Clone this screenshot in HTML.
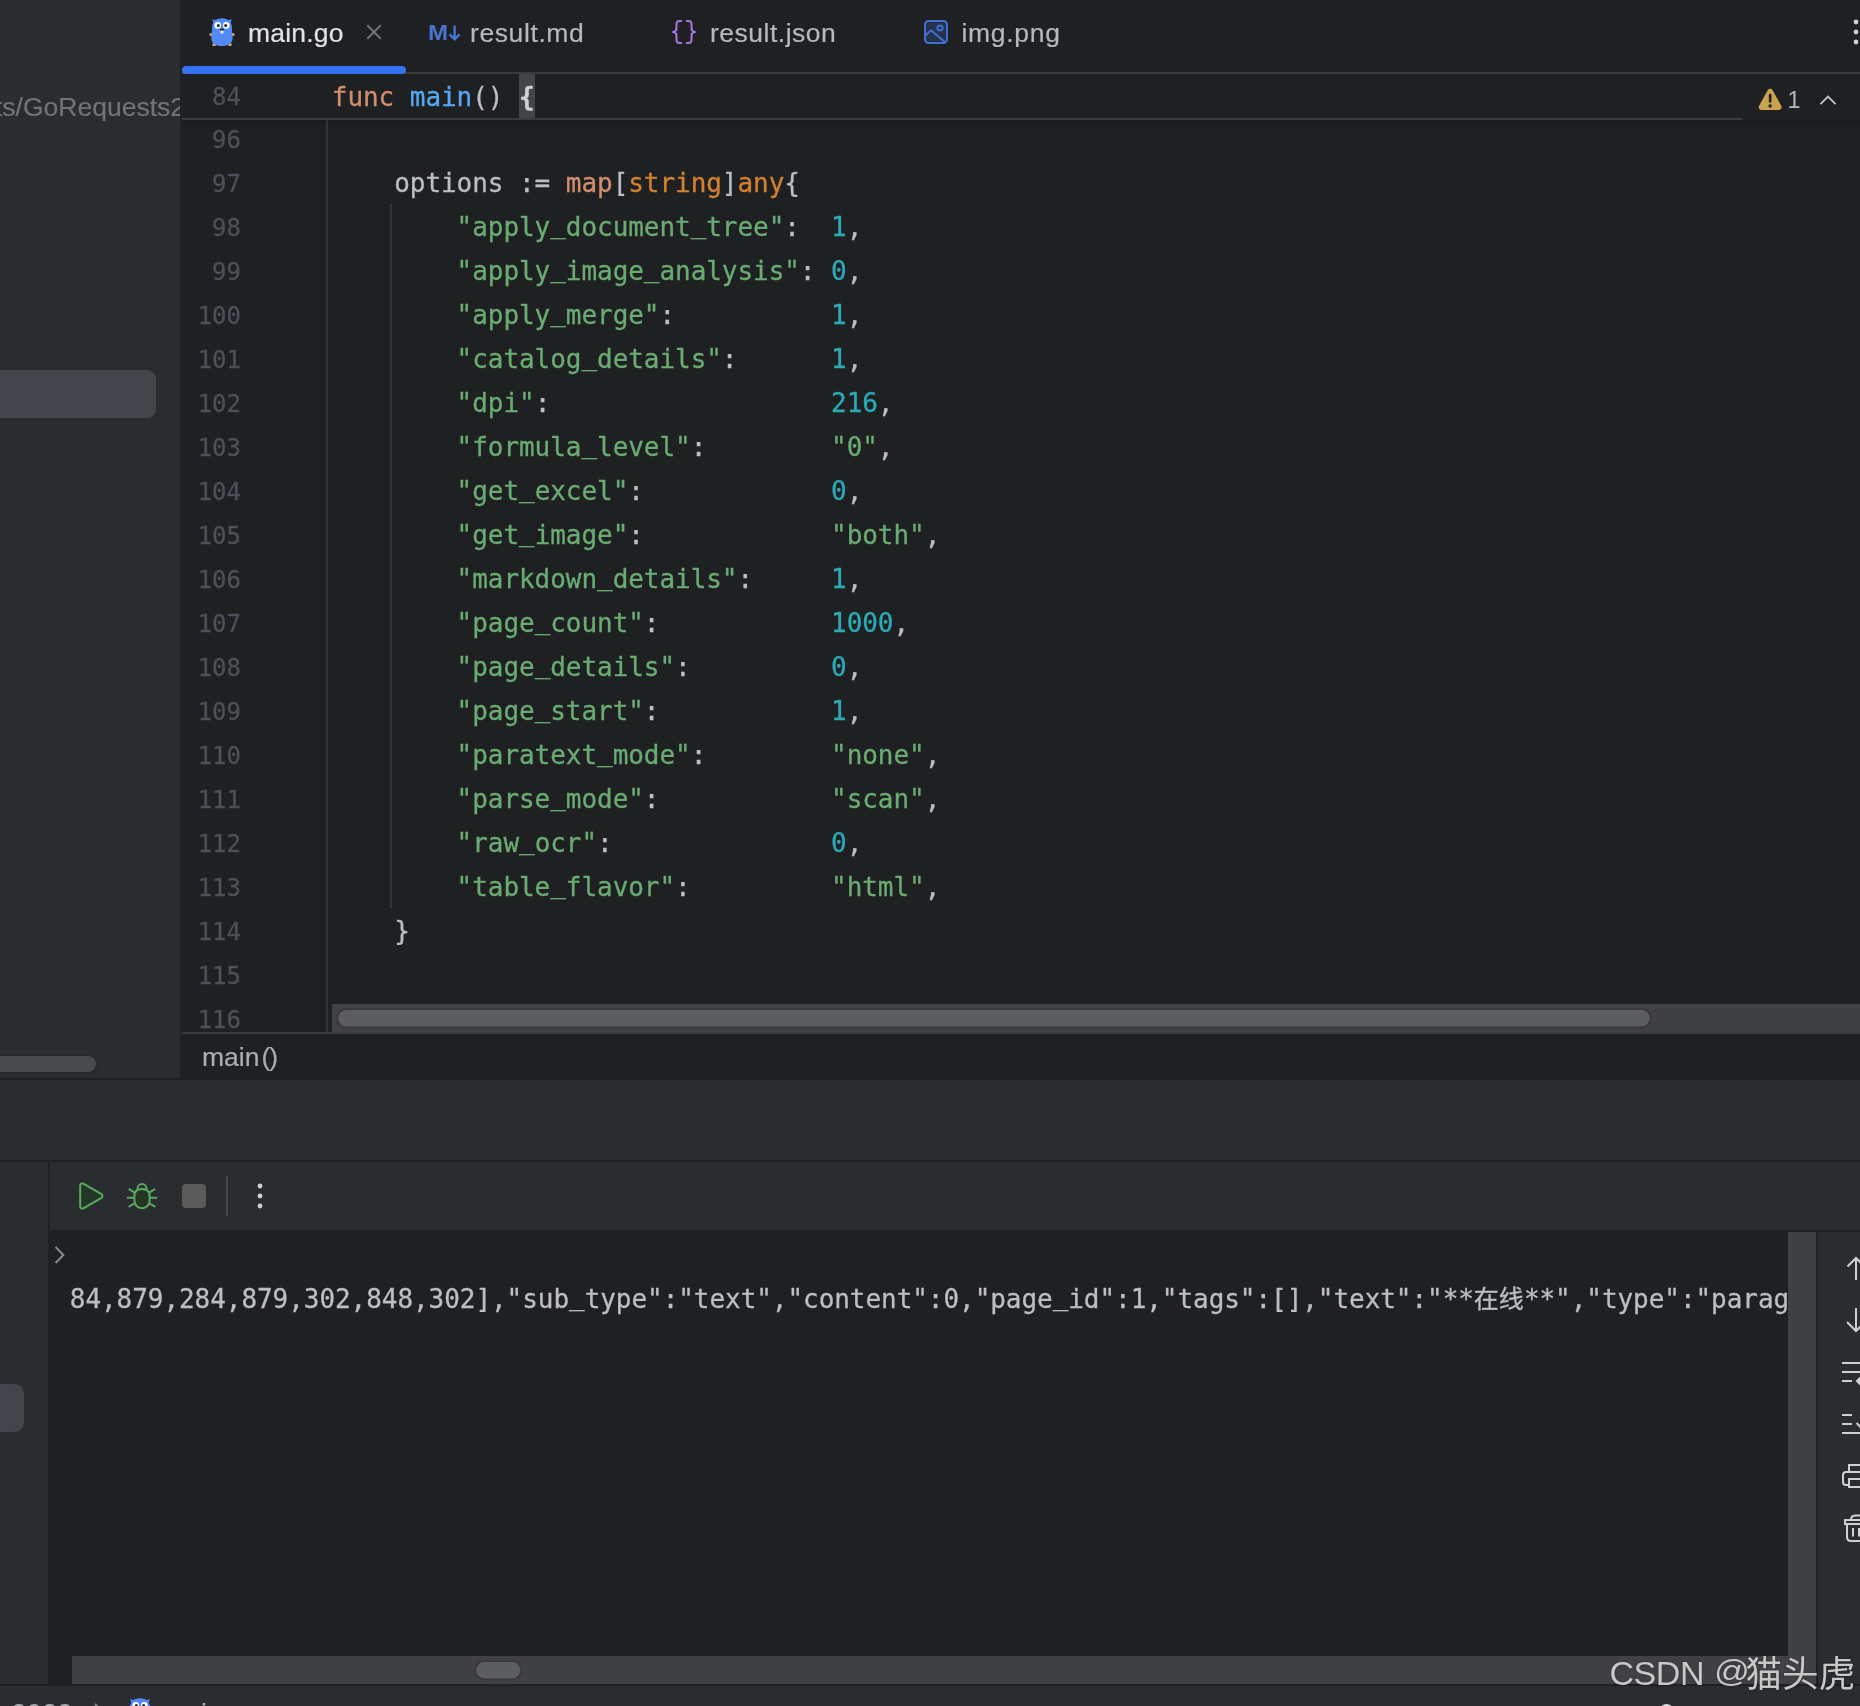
<!DOCTYPE html>
<html lang="zh-CN">
<head>
<meta charset="utf-8">
<title>main.go</title>
<style>
html,body{margin:0;padding:0}
body{width:1860px;height:1706px;overflow:hidden;position:relative;background:#1f2022;color:#bcbec4;font-family:"Liberation Sans","Noto Sans CJK SC",sans-serif;font-size:26.5px;-webkit-font-smoothing:antialiased}
#root{position:absolute;left:0;top:0;width:1860px;height:1706px;overflow:hidden;will-change:transform}
.a{position:absolute}
.ui{font-family:"Liberation Sans","Noto Sans CJK SC",sans-serif;font-size:26.5px;line-height:40px;white-space:pre;-webkit-text-stroke:0.2px currentColor}
.mono{-webkit-text-stroke:0.3px currentColor;font-family:"DejaVu Sans Mono","Liberation Mono","Noto Sans CJK SC",monospace;font-size:26px;letter-spacing:-0.053px;white-space:pre;line-height:44px;font-kerning:none;font-variant-ligatures:none}
.ln{position:absolute;left:181.5px;width:59.5px;text-align:right;color:#4b5059;height:44px;font-size:24px;letter-spacing:0}
.cl{position:absolute;left:331.8px;height:44px;color:#bcbec4}
.k{color:#cf8e6d}.t{color:#d3802f}.f{color:#56a8f5}.s{color:#6aab73}.n{color:#2aacb8}.d{color:#bcbec4}
.mono i{font-style:normal;position:relative;top:-3.5px}
.panel{background:#2a2d30}
.sans{font-family:"Liberation Sans","Noto Sans CJK SC",sans-serif}
.cjk{font-family:"Liberation Sans","Noto Sans CJK SC",sans-serif}
.wm{color:#c8c8c8;white-space:pre;text-shadow:0 0 2px rgba(0,0,0,.35)}
</style>
</head>
<body>
<div id="root">
<!-- project tool window (left) -->
<div class="a panel" style="left:0;top:0;width:180px;height:1078px;overflow:hidden">
 <div class="a ui" style="left:-5px;top:86.5px;color:#6f737a">ts/GoRequests2023</div>
 <div class="a" style="left:0;top:370px;width:156px;height:48px;background:#43454a;border-radius:0 9px 9px 0"></div>
 <svg class="a" style="left:-23px;top:1053px" width="122" height="22" viewBox="-23 1053 122 22"><rect x="-20.8" y="1055.2" width="117.6" height="17.6" rx="8.8" fill="#48494b" stroke="#25272a" stroke-width="1.6"/></svg>
</div>
<!-- editor tabs -->
<div class="a" style="left:182px;top:72px;width:1678px;height:2px;background:#393b40"></div>
<div class="a" style="left:182px;top:66px;width:224px;height:8px;background:#3574f0;border-radius:4px"></div>

<svg class="a" style="left:208px;top:16px" width="28" height="32" viewBox="0 0 28 32">
 <path d="M4.2 3.2 L9.5 4.6 L6 8.6 Z" fill="#548af7"/><path d="M23.8 3.2 L18.5 4.6 L22 8.6 Z" fill="#548af7"/>
 <ellipse cx="3.4" cy="18.6" rx="2.2" ry="1.7" fill="#d39b78"/><ellipse cx="24.6" cy="18.6" rx="2.2" ry="1.7" fill="#d39b78"/>
 <ellipse cx="6.2" cy="28.6" rx="2" ry="1.6" fill="#d39b78"/><ellipse cx="21.8" cy="28.6" rx="2" ry="1.6" fill="#d39b78"/>
 <path d="M14 2.2 C20.5 2.2 24 6.2 24 12 C24 16 24.6 19 24.6 22.5 C24.6 27.5 20 30 14 30 C8 30 3.4 27.5 3.4 22.5 C3.4 19 4 16 4 12 C4 6.2 7.500 2.2 14 2.2 Z" fill="#548af7"/>
 <circle cx="9.700" cy="9.400" r="3.300" fill="#fff"/><circle cx="18.3" cy="9.400" r="3.300" fill="#fff"/>
 <circle cx="10.3" cy="9.600" r="1.500" fill="#1e1f22"/><circle cx="17.7" cy="9.600" r="1.500" fill="#1e1f22"/>
 <ellipse cx="14" cy="13.800" rx="2.100" ry="1.300" fill="#1e1f22"/>
 <rect x="12.400" y="14.600" width="3.200" height="2.800" rx="0.600" fill="#f3e3d3"/>
</svg>
<div class="a ui" style="left:248px;top:12.5px;color:#dfe1e5;letter-spacing:0.2px">main.go</div>
<svg class="a" style="left:364px;top:22px" width="20" height="20" viewBox="0 0 20 20"><path d="M3.300 3.300 L16.7 16.7 M16.7 3.300 L3.300 16.7" stroke="#6f737a" stroke-width="2" fill="none"/></svg>

<div class="a sans" style="left:427.5px;top:20.2px;font-weight:bold;font-size:21.5px;line-height:26px;letter-spacing:0;transform:scaleX(1.12);transform-origin:0 0;color:#4674d0">M</div>
<svg class="a" style="left:448px;top:22px" width="14" height="22" viewBox="0 0 14 22"><path d="M6.600 3.400 V17.2 M1.600 12.300 L6.600 17.4 L11.600 12.300" stroke="#4674d0" stroke-width="2.400" fill="none"/></svg>
<div class="a ui" style="left:470px;top:12.5px;color:#b4b8bf;letter-spacing:0.6px">result.md</div>

<svg class="a" style="left:670px;top:18px" width="28" height="28" viewBox="0 0 28 28"><g fill="none" stroke="#a775dc" stroke-width="2" stroke-linecap="round" stroke-linejoin="round">
 <path d="M11.200 3 H9.500 C7.600 3 6.500 4.100 6.500 6 V10.500 C6.500 12.400 5.300 13.600 3 14 C5.300 14.400 6.500 15.600 6.500 17.500 V22 C6.500 23.900 7.600 25 9.500 25 H11.200"/>
 <path d="M16.800 3 H18.500 C20.400 3 21.500 4.100 21.500 6 V10.500 C21.500 12.400 22.700 13.600 25 14 C22.700 14.400 21.500 15.600 21.500 17.500 V22 C21.500 23.900 20.400 25 18.500 25 H16.800"/></g></svg>
<div class="a ui" style="left:710px;top:12.5px;color:#b4b8bf;letter-spacing:0.5px">result.json</div>

<svg class="a" style="left:922px;top:18px" width="28" height="28" viewBox="0 0 28 28">
 <rect x="3" y="3" width="22" height="22" rx="3.500" fill="#25324d" stroke="#3f6fd0" stroke-width="2"/>
 <circle cx="18" cy="10" r="2.600" fill="none" stroke="#3f6fd0" stroke-width="2"/>
 <path d="M3.500 17.500 L9 12.300 L23.500 24.500" fill="none" stroke="#3f6fd0" stroke-width="2"/>
</svg>
<div class="a ui" style="left:961.5px;top:12.5px;color:#b4b8bf;letter-spacing:0.7px">img.png</div>

<svg class="a" style="left:1850px;top:16px" width="10" height="32" viewBox="0 0 10 32"><circle cx="6" cy="6" r="2.400" fill="#ced0d6"/><circle cx="6" cy="16" r="2.400" fill="#ced0d6"/><circle cx="6" cy="26" r="2.400" fill="#ced0d6"/></svg>
<!-- sticky scope line -->
<div class="a" style="left:519px;top:74px;width:16px;height:44px;background:#43454a"></div>
<div class="mono ln" style="top:75px">84</div>
<div class="mono cl" style="top:75px"><span class="k">func</span> <span class="f">main</span>() <span style="color:#ced0d6;font-weight:bold">{</span></div>
<div class="a" style="left:182px;top:118px;width:1560px;height:2px;background:#393b40"></div>
<div class="a" style="left:182px;top:120px;width:1678px;height:10px;background:linear-gradient(rgba(0,0,0,.15),rgba(0,0,0,0))"></div>
<svg class="a" style="left:1757px;top:87px" width="26.3" height="24.4" viewBox="0 0 28 26"><path d="M14 1.800 C15.200 1.800 16.100 2.400 16.700 3.500 L25.800 20 C27 22.200 25.600 24.400 23.200 24.400 H4.800 C2.400 24.400 1 22.200 2.200 20 L11.300 3.500 C11.900 2.400 12.800 1.800 14 1.800 Z" fill="#c9a34e"/><rect x="12.600" y="7.200" width="2.800" height="9.600" rx="1.400" fill="#1e1f22"/><circle cx="14" cy="20.200" r="1.800" fill="#1e1f22"/></svg>
<div class="a sans" style="left:1787.500px;top:86px;font-size:23.500px;line-height:28px;color:#b4b8bf">1</div>
<svg class="a" style="left:1818px;top:92px" width="20" height="16" viewBox="0 0 20 16"><path d="M2.400 12.200 L10 4.600 L17.600 12.200" fill="none" stroke="#c3c5cb" stroke-width="1.8"/></svg>
<!-- gutter, code -->
<div class="a" style="left:326px;top:120px;width:2px;height:912px;background:#313438"></div>
<div class="a" style="left:390px;top:204px;width:2px;height:704px;background:#313438"></div>
<div class="mono ln" style="top:118px">96</div>
<div class="mono ln" style="top:162px">97</div><div class="mono cl" style="top:161px">    options := <span class="k">map</span>[<span class="t">string</span>]<span class="t">any</span>{</div>
<div class="mono ln" style="top:206px">98</div><div class="mono cl" style="top:205px">        <span class="s">"apply<i>_</i>document<i>_</i>tree"</span>:  <span class="n">1</span>,</div>
<div class="mono ln" style="top:250px">99</div><div class="mono cl" style="top:249px">        <span class="s">"apply<i>_</i>image<i>_</i>analysis"</span>: <span class="n">0</span>,</div>
<div class="mono ln" style="top:294px">100</div><div class="mono cl" style="top:293px">        <span class="s">"apply<i>_</i>merge"</span>:          <span class="n">1</span>,</div>
<div class="mono ln" style="top:338px">101</div><div class="mono cl" style="top:337px">        <span class="s">"catalog<i>_</i>details"</span>:      <span class="n">1</span>,</div>
<div class="mono ln" style="top:382px">102</div><div class="mono cl" style="top:381px">        <span class="s">"dpi"</span>:                  <span class="n">216</span>,</div>
<div class="mono ln" style="top:426px">103</div><div class="mono cl" style="top:425px">        <span class="s">"formula<i>_</i>level"</span>:        <span class="s">"0"</span>,</div>
<div class="mono ln" style="top:470px">104</div><div class="mono cl" style="top:469px">        <span class="s">"get<i>_</i>excel"</span>:            <span class="n">0</span>,</div>
<div class="mono ln" style="top:514px">105</div><div class="mono cl" style="top:513px">        <span class="s">"get<i>_</i>image"</span>:            <span class="s">"both"</span>,</div>
<div class="mono ln" style="top:558px">106</div><div class="mono cl" style="top:557px">        <span class="s">"markdown<i>_</i>details"</span>:     <span class="n">1</span>,</div>
<div class="mono ln" style="top:602px">107</div><div class="mono cl" style="top:601px">        <span class="s">"page<i>_</i>count"</span>:           <span class="n">1000</span>,</div>
<div class="mono ln" style="top:646px">108</div><div class="mono cl" style="top:645px">        <span class="s">"page<i>_</i>details"</span>:         <span class="n">0</span>,</div>
<div class="mono ln" style="top:690px">109</div><div class="mono cl" style="top:689px">        <span class="s">"page<i>_</i>start"</span>:           <span class="n">1</span>,</div>
<div class="mono ln" style="top:734px">110</div><div class="mono cl" style="top:733px">        <span class="s">"paratext<i>_</i>mode"</span>:        <span class="s">"none"</span>,</div>
<div class="mono ln" style="top:778px">111</div><div class="mono cl" style="top:777px">        <span class="s">"parse<i>_</i>mode"</span>:           <span class="s">"scan"</span>,</div>
<div class="mono ln" style="top:822px">112</div><div class="mono cl" style="top:821px">        <span class="s">"raw<i>_</i>ocr"</span>:              <span class="n">0</span>,</div>
<div class="mono ln" style="top:866px">113</div><div class="mono cl" style="top:865px">        <span class="s">"table<i>_</i>flavor"</span>:         <span class="s">"html"</span>,</div>
<div class="mono ln" style="top:910px">114</div><div class="mono cl" style="top:909px">    }</div>
<div class="mono ln" style="top:954px">115</div>
<div class="mono ln" style="top:998px">116</div>
<!-- editor scrollbar + breadcrumbs -->
<div class="a" style="left:332px;top:1004px;width:1528px;height:28px;background:#404143"></div>
<svg class="a" style="left:335px;top:1006.7px" width="1318" height="22.6" viewBox="335 1006.7 1318 22.6"><rect x="337.1" y="1008.8" width="1313.8" height="18.4" rx="9.2" fill="#5c5d60" stroke="#37383a" stroke-width="1.8"/></svg>
<div class="a" style="left:182px;top:1032px;width:1678px;height:2px;background:#393b40"></div>
<div class="a ui" style="left:202px;top:1037px;color:#a9acb5">main<span style="margin-left:2px;letter-spacing:-1px">()</span></div>
<!-- run tool window -->
<div class="a panel" style="left:0;top:1080px;width:1860px;height:80px"></div>
<div class="a panel" style="left:0;top:1162px;width:48px;height:522px"><div class="a" style="left:0;top:222px;width:24px;height:48px;background:#43454a;border-radius:0 9px 9px 0"></div></div>
<div class="a panel" style="left:50px;top:1162px;width:1810px;height:68px"></div>
<svg class="a" style="left:76px;top:1180px" width="32" height="32" viewBox="0 0 32 32"><path d="M4.200 5.400 C4.200 3.700 5.900 2.800 7.300 3.600 L25.500 14.200 C26.900 15 26.900 17 25.500 17.800 L7.300 28.400 C5.900 29.200 4.200 28.300 4.200 26.600 Z" fill="#253627" stroke="#5aa860" stroke-width="2" stroke-linejoin="round"/></svg>
<svg class="a" style="left:126px;top:1180px" width="32" height="32" viewBox="0 0 32 32"><g fill="none" stroke="#5aa860" stroke-width="2" stroke-linecap="round">
 <path d="M11.400 9.200 C11.400 6 13.400 4 16 4 C18.600 4 20.600 6 20.600 9.200"/>
 <path d="M1.600 17.800 H8.400 M23.600 17.800 H30.400 M3.400 9.400 L9.400 12.800 M28.600 9.400 L22.600 12.800 M3.400 26.400 L9.400 23 M28.600 26.400 L22.600 23"/>
 <path d="M16 9 C20.800 9 23.600 11.600 23.600 16 V20.400 C23.600 25 20.400 28.200 16 28.200 C11.600 28.200 8.400 25 8.400 20.400 V16 C8.400 11.600 11.200 9 16 9 Z" fill="#253627"/></g></svg>
<div class="a" style="left:182px;top:1184px;width:24px;height:24px;background:#5a5a5a;border-radius:4px"></div>
<div class="a" style="left:226px;top:1176px;width:2px;height:40px;background:#43454a"></div>
<svg class="a" style="left:254px;top:1180px" width="12" height="32" viewBox="0 0 12 32"><circle cx="6" cy="6" r="2.400" fill="#ced0d6"/><circle cx="6" cy="16" r="2.400" fill="#ced0d6"/><circle cx="6" cy="26" r="2.400" fill="#ced0d6"/></svg>
<svg class="a" style="left:52px;top:1244px" width="16" height="22" viewBox="0 0 16 22"><path d="M3.600 3 L11.400 11 L3.600 19" fill="none" stroke="#868a91" stroke-width="2"/></svg>
<div class="a" style="left:50px;top:1232px;width:1738px;height:424px;overflow:hidden"><div class="mono a" style="left:19.8px;top:45px;color:#bcbec4">84,879,284,879,302,848,302],"sub<i>_</i>type":"text","content":0,"page<i>_</i>id":1,"tags":[],"text":"**<span style="font-size:25px;letter-spacing:0">在线</span>**","type":"paragraph","pos":[848,</div></div>
<div class="a" style="left:1788px;top:1232px;width:28px;height:424px;background:#404143"></div>
<div class="a" style="left:72px;top:1656px;width:1744px;height:28px;background:#404144"></div>
<svg class="a" style="left:473px;top:1658.8px" width="50.3" height="22.4" viewBox="473 1658.8 50.3 22.4"><rect x="475.1" y="1660.9" width="46.1" height="18.2" rx="9.1" fill="#5c5d60" stroke="#37383a" stroke-width="1.8"/></svg>
<div class="a panel" style="left:1818px;top:1232px;width:42px;height:452px"></div>
<svg class="a" style="left:1818px;top:1232px" width="42" height="452" viewBox="1818 1232 42 452"><g fill="none" stroke="#ced0d6" stroke-width="2">
 <path d="M1856 1280 V1258 M1847.5 1266.5 L1856 1258 L1864.5 1266.5"/>
 <path d="M1856 1308 V1331 M1847 1322 L1856 1331 L1865 1322"/>
 <path d="M1842 1363 H1870 M1842 1372 H1870 M1842 1381 H1852"/><path d="M1862 1376 L1857 1381 L1862 1386" fill="#ced0d6"/>
 <path d="M1842 1415 H1852 M1842 1424 H1852 M1842 1433 H1870 M1856.500 1423 L1860 1426.500 L1864 1422.500"/>
 <path d="M1849 1471 V1465 H1870 M1849 1485 H1846 C1844 1485 1843 1484 1843 1482 V1475 C1843 1473 1844 1472 1846 1472 H1870 M1849 1488 V1479 H1870 M1849 1487 H1870"/>
 <path d="M1870 1520 H1845 V1524 H1870 M1851 1519.500 C1851 1517 1853 1515.500 1856 1515.500 H1870 M1847 1524 V1537 C1847 1539.500 1848.500 1541 1851 1541 H1870 M1853 1528 V1536.500 M1859 1528 V1536.500"/>
</g></svg>
<!-- status bar -->
<div class="a panel" style="left:0;top:1686px;width:1860px;height:20px;overflow:hidden"><div class="a ui" style="left:11.5px;top:6.5px;line-height:40px;font-size:26.5px;letter-spacing:0.6px;color:#a9acb5">2023</div><svg class="a" style="left:93px;top:15.5px" width="12" height="20" viewBox="0 0 12 20"><path d="M2 2 L9 9.500 L2 17" fill="none" stroke="#868a91" stroke-width="2"/></svg><svg class="a" style="left:126px;top:9.5px" width="28" height="32" viewBox="0 0 28 32"><path d="M4.200 3.200 L9.500 4.600 L6 8.600 Z" fill="#548af7"/><path d="M23.800 3.200 L18.500 4.600 L22 8.600 Z" fill="#548af7"/><path d="M14 2.200 C20.500 2.200 24 6.200 24 12 V30 H4 V12 C4 6.200 7.500 2.200 14 2.200 Z" fill="#548af7"/><circle cx="9.700" cy="9.400" r="3.300" fill="#fff"/><circle cx="18.300" cy="9.400" r="3.300" fill="#fff"/><circle cx="10.300" cy="9.600" r="1.500" fill="#1e1f22"/><circle cx="17.700" cy="9.600" r="1.500" fill="#1e1f22"/></svg><div class="a ui" style="left:165px;top:6.5px;font-size:26px;color:#a9acb5">main.go</div><div class="a" style="left:1660px;top:17.500px;width:13px;height:12px;border-radius:6px;background:#ced0d6"></div></div>
<!-- watermark -->
<div class="a sans wm" style="left:1609.5px;top:1651.5px;font-size:34px;line-height:42px;letter-spacing:-0.45px">CSDN</div>
<div class="a sans wm" style="left:1714px;top:1650.5px;font-size:31px;line-height:42px;transform:scaleX(1.14);transform-origin:0 0">@</div>
<div class="a cjk wm" style="left:1745.5px;top:1650.5px;font-size:36.6px;font-weight:400;line-height:48px">猫头虎</div>
</div>
</body>
</html>
